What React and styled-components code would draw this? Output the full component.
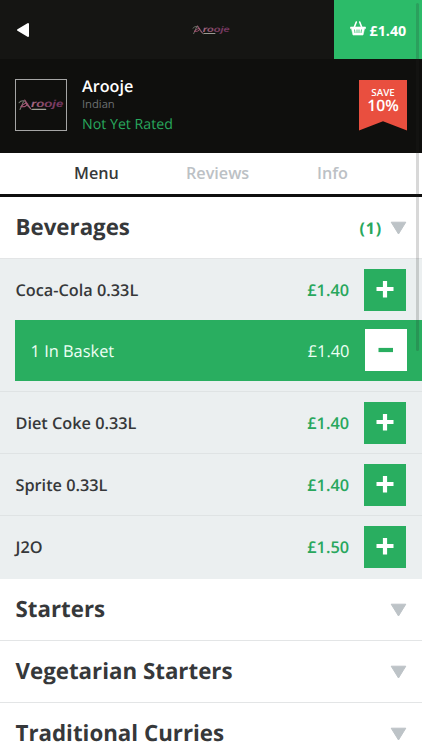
import React from "react";
import styled, { createGlobalStyle } from "styled-components";

const Global = createGlobalStyle`
  * { box-sizing: border-box; }
  html, body { margin: 0; height: 750px; overflow: hidden; background: #fff; }
  body { font-family: "Open Sans", "Noto Sans", sans-serif; color: #36383a; text-rendering: geometricPrecision; }
  button { font: inherit; border: 0; padding: 0; background: none; color: inherit; }
`;

const Screen = styled.main`
  position: relative;
  width: 422px;
  height: 750px;
  overflow: hidden;
  background: #fff;
`;

const TopBar = styled.header`
  display: grid;
  grid-template-columns: 88px 1fr 88px;
  height: 59px;
  background: #151513;
`;

const BackButton = styled.button`
  display: flex;
  align-items: center;
  padding-left: 16px;
  padding-top: 1px;
`;

const Brand = styled.div`
  display: flex;
  align-items: center;
  justify-content: center;
  padding-top: 1px;
`;

const BasketButton = styled.button`
  display: flex;
  align-items: center;
  gap: 4px;
  padding: 2px 0 0 15.5px;
  background: #2cbb69;
  color: #fff;
  font-size: 14.3px;
  font-weight: 700;
  line-height: 20px;
  svg { margin-top: -5px; }
`;

const Restaurant = styled.section`
  display: flex;
  align-items: flex-start;
  height: 94px;
  padding: 20px 15px 0;
  background: #0f0f0d;
`;

const Thumb = styled.div`
  display: flex;
  align-items: center;
  justify-content: center;
  width: 52px;
  height: 52px;
  border: 1px solid #a5a5a5;
`;

const Details = styled.div`
  flex: 1;
  padding-left: 15px;
  margin-top: -4px;
`;

const Name = styled.h1`
  margin: 0;
  color: #fff;
  font-size: 16.2px;
  font-weight: 600;
  line-height: 22px;
`;

const Cuisine = styled.div`
  margin-top: 1px;
  color: #6c6f71;
  font-size: 11.2px;
  line-height: 14px;
`;

const Rating = styled.div`
  margin-top: 3px;
  color: #28a75d;
  font-size: 14.2px;
  line-height: 20px;
`;

const Ribbon = styled.div`
  display: flex;
  flex-direction: column;
  align-items: center;
  width: 48px;
  height: 51px;
  margin-top: 0.5px;
  padding-top: 7px;
  color: #fff;
  background: #e94f3f;
  clip-path: polygon(0 0, 100% 0, 100% 100%, 50% 82%, 0 100%);
`;

const RibbonLabel = styled.span`
  font-size: 9.8px;
  font-weight: 600;
  line-height: 12px;
`;

const RibbonValue = styled.span`
  font-size: 15.7px;
  font-weight: 600;
  line-height: 12px;
`;

const Tabs = styled.nav`
  display: flex;
  height: 44px;
  padding-left: 74px;
  border-bottom: 3px solid #0f0f0f;
`;

const Tab = styled.button`
  width: ${(p) => p.$width}px;
  height: 40px;
  text-align: left;
  color: ${(p) => (p.$active ? "#36383a" : "#bcc1c5")};
  font-size: 16.2px;
  font-weight: 600;
  line-height: 39px;
`;

const Category = styled.section`
  display: flex;
  align-items: center;
  height: 62px;
  padding: 0 15px 0 15.5px;
  border-bottom: 1px solid #e3e5e6;
`;

const CategoryTitle = styled.h2`
  flex: 1;
  margin: 0;
  padding-bottom: 2px;
  font-size: 22.3px;
  font-weight: 700;
  line-height: 30px;
`;

const Count = styled.span`
  margin-right: 8px;
  color: #28a75d;
  font-size: 16px;
  font-weight: 700;
  letter-spacing: 0.8px;
`;

const Items = styled.div`
  padding-bottom: 1px;
  background: #ebeff0;
`;

const Item = styled.article`
  border-bottom: 1px solid #dfe3e4;
  padding-bottom: ${(p) => (p.$selected ? 10 : 0)}px;
  &:last-child { border-bottom-color: transparent; }
`;

const ItemRow = styled.div`
  display: flex;
  align-items: center;
  height: 61px;
  padding: 0 16px 0 15.5px;
  font-size: 16.3px;
  font-weight: 600;
`;

const BasketRow = styled(ItemRow)`
  margin-left: 15px;
  padding: 0 15.5px 0 15.5px;
  background: #29ae60;
  color: #edfff4;
  font-size: 16.4px;
  font-weight: 400;
  button { margin-bottom: 1px; }
`;

const ItemName = styled.span`
  flex: 1;
`;

const Price = styled.span`
  margin-right: 15px;
  color: ${(p) => (p.$light ? "#edfff4" : "#28a75d")};
`;

const QuantityButton = styled.button`
  display: flex;
  align-items: center;
  justify-content: center;
  width: 42px;
  height: 42px;
  background: ${(p) => (p.$remove ? "#fff" : "#29ae60")};
  color: ${(p) => (p.$remove ? "#29ae60" : "#fff")};
`;

const ScrollThumb = styled.div`
  position: absolute;
  top: 3px;
  right: 3px;
  width: 3px;
  height: 348px;
  border-radius: 2px;
  background: rgba(40, 40, 40, 0.18);
`;

function Logo({ width, id }) {
  return (
    <svg width={width} height={width * 0.27} viewBox="0 0 48 13" role="img" aria-label="Arooje">
      <defs>
        <linearGradient id={id}>
          <stop offset="0" stopColor="#a96c83" />
          <stop offset="0.5" stopColor="#814164" />
          <stop offset="1" stopColor="#713360" />
        </linearGradient>
      </defs>
      <g fill="none" strokeLinecap="round">
        <path d="M1 4Q3 1 7 2M6 2L2 11M7 2L10 7L14 11" stroke="#777a72" strokeWidth="1.1" />
        <path d="M3 8Q8 3 10 5Q8 9 3 8M7 1L9 4L13 10" stroke="#a65575" strokeWidth="1.1" />
        <path d="M15 10.8H29" stroke="#a3a19a" strokeWidth="1.2" />
      </g>
      <text x="13.5" y="8.5" fill={`url(#${id})`} fontFamily="Liberation Sans" fontSize="10.5" fontStyle="italic" fontWeight="700" textLength="34" lengthAdjust="spacingAndGlyphs">rooje</text>
    </svg>
  );
}

const BackIcon = () => (
  <svg width="14" height="16" viewBox="0 0 14 16" aria-label="Back">
    <path d="M2 8L12 2V14Z" fill="#fff" stroke="#fff" strokeWidth="2" strokeLinejoin="round" />
  </svg>
);

const BasketIcon = () => (
  <svg width="16" height="15" viewBox="0 0 16 15">
    <path d="M4 7L6.3 1M12 7L9.7 1" stroke="#fff" strokeWidth="1.6" strokeLinecap="round" />
    <path d="M0.5 6H15.5V7.6H14.5L13 14H3L1.5 7.6H0.5Z" fill="#fff" stroke="#fff" strokeWidth="0.6" strokeLinejoin="round" />
    <path d="M4.5 8.5L5 12M7 8.5V12M9 8.5V12M11.5 8.5L11 12" stroke="#2cbb69" strokeWidth="0.8" />
  </svg>
);

const DownIcon = () => (
  <svg width="17" height="14" viewBox="0 0 17 14">
    <path d="M1.2 1.2H15.8L8.5 13Z" fill="#bdc3c7" stroke="#bdc3c7" strokeWidth="1" strokeLinejoin="round" />
  </svg>
);

const SignIcon = ({ minus }) => (
  <svg width="18" height="18" viewBox="0 0 18 18">
    <path d={minus ? "M1.5 9H16" : "M0.5 8H17.5M9 -0.5V16.5"} stroke="currentColor" strokeWidth="4.2" />
  </svg>
);

const beverages = [
  { name: "Coca-Cola 0.33L", price: "£1.40", quantity: 1 },
  { name: "Diet Coke 0.33L", price: "£1.40" },
  { name: "Sprite 0.33L", price: "£1.40" },
  { name: "J2O", price: "£1.50" },
];

export default function App() {
  return (
    <>
      <Global />
      <Screen>
        <TopBar>
          <BackButton aria-label="Back"><BackIcon /></BackButton>
          <Brand><Logo width={38} id="brandTop" /></Brand>
          <BasketButton><BasketIcon />£1.40</BasketButton>
        </TopBar>
        <Restaurant>
          <Thumb><Logo width={46} id="brandThumb" /></Thumb>
          <Details>
            <Name>Arooje</Name>
            <Cuisine>Indian</Cuisine>
            <Rating>Not Yet Rated</Rating>
          </Details>
          <Ribbon>
            <RibbonLabel>SAVE</RibbonLabel>
            <RibbonValue>10%</RibbonValue>
          </Ribbon>
        </Restaurant>
        <Tabs>
          <Tab $active $width={112}>Menu</Tab>
          <Tab $width={131}>Reviews</Tab>
          <Tab $width={60}>Info</Tab>
        </Tabs>
        <Category>
          <CategoryTitle>Beverages</CategoryTitle>
          <Count>(1)</Count>
          <DownIcon />
        </Category>
        <Items>
          {beverages.map((b) => (
            <Item key={b.name} $selected={!!b.quantity}>
              <ItemRow>
                <ItemName>{b.name}</ItemName>
                <Price>{b.price}</Price>
                <QuantityButton aria-label="Add"><SignIcon /></QuantityButton>
              </ItemRow>
              {b.quantity && (
                <BasketRow>
                  <ItemName>{b.quantity} In Basket</ItemName>
                  <Price $light>{b.price}</Price>
                  <QuantityButton $remove aria-label="Remove"><SignIcon minus /></QuantityButton>
                </BasketRow>
              )}
            </Item>
          ))}
        </Items>
        {["Starters", "Vegetarian Starters", "Traditional Curries"].map((title) => (
          <Category key={title}>
            <CategoryTitle>{title}</CategoryTitle>
            <DownIcon />
          </Category>
        ))}
        <ScrollThumb />
      </Screen>
    </>
  );
}
